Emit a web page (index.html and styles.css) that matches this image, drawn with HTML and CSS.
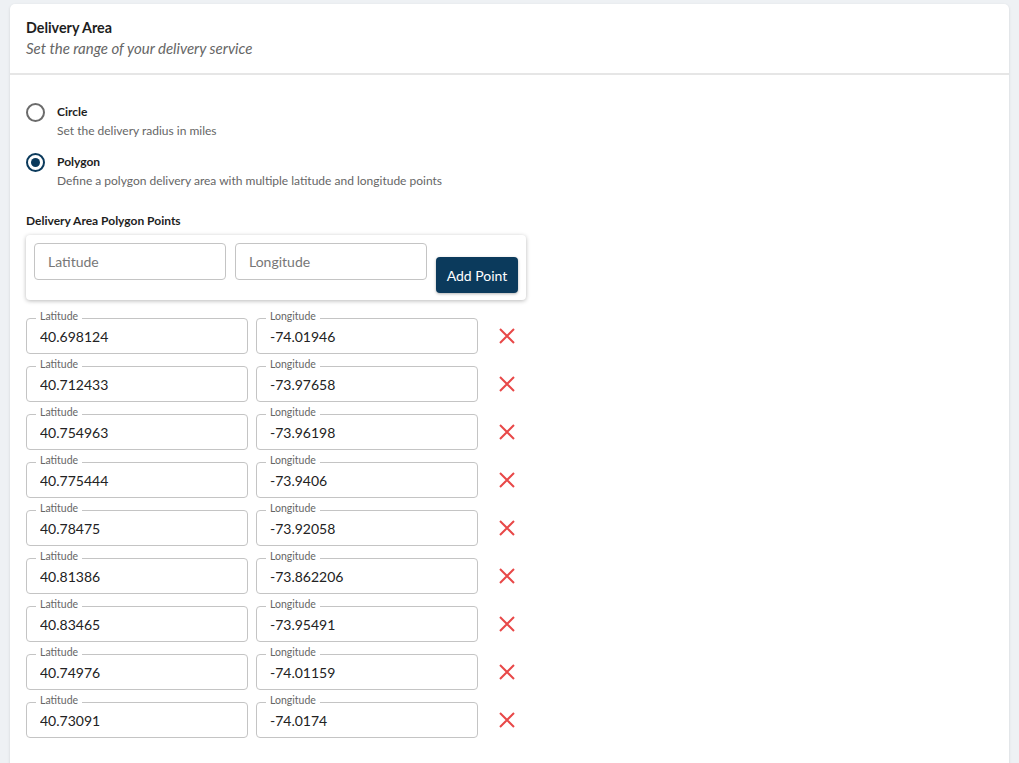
FILE: index.html
```html
<!DOCTYPE html>
<html>
  <head>
    <link rel="stylesheet" href="styles.css">
  </head>
  <body>
    <div class="card">
      <div class="cardHeader">
        <h2 class="title">Delivery Area</h2>
        <p class="subtitle">Set the range of your delivery service</p>
      </div>
      <div class="cardBody">
        <div class="radioRow">
          <span class="radio"></span>
          <div>
            <p class="radioLabel">Circle</p>
            <p class="radioHint">Set the delivery radius in miles</p>
          </div>
        </div>
        <div class="radioRow">
          <span class="radio checked"></span>
          <div>
            <p class="radioLabel">Polygon</p>
            <p class="radioHint">Define a polygon delivery area with multiple latitude and longitude points</p>
          </div>
        </div>

        <p class="sectionLabel">Delivery Area Polygon Points</p>

        <div class="addBox">
          <input class="addInput" placeholder="Latitude">
          <input class="addInput" placeholder="Longitude">
          <button class="addButton">Add Point</button>
        </div>

        <div class="points">
          <div class="pointRow">
            <fieldset class="field"><legend>Latitude</legend><input value="40.698124"></fieldset>
            <fieldset class="field"><legend>Longitude</legend><input value="-74.01946"></fieldset>
            <button class="remove"><svg viewBox="0 0 16 16"><path d="M1 1L15 15M15 1L1 15"/></svg></button>
          </div>
          <div class="pointRow">
            <fieldset class="field"><legend>Latitude</legend><input value="40.712433"></fieldset>
            <fieldset class="field"><legend>Longitude</legend><input value="-73.97658"></fieldset>
            <button class="remove"><svg viewBox="0 0 16 16"><path d="M1 1L15 15M15 1L1 15"/></svg></button>
          </div>
          <div class="pointRow">
            <fieldset class="field"><legend>Latitude</legend><input value="40.754963"></fieldset>
            <fieldset class="field"><legend>Longitude</legend><input value="-73.96198"></fieldset>
            <button class="remove"><svg viewBox="0 0 16 16"><path d="M1 1L15 15M15 1L1 15"/></svg></button>
          </div>
          <div class="pointRow">
            <fieldset class="field"><legend>Latitude</legend><input value="40.775444"></fieldset>
            <fieldset class="field"><legend>Longitude</legend><input value="-73.9406"></fieldset>
            <button class="remove"><svg viewBox="0 0 16 16"><path d="M1 1L15 15M15 1L1 15"/></svg></button>
          </div>
          <div class="pointRow">
            <fieldset class="field"><legend>Latitude</legend><input value="40.78475"></fieldset>
            <fieldset class="field"><legend>Longitude</legend><input value="-73.92058"></fieldset>
            <button class="remove"><svg viewBox="0 0 16 16"><path d="M1 1L15 15M15 1L1 15"/></svg></button>
          </div>
          <div class="pointRow">
            <fieldset class="field"><legend>Latitude</legend><input value="40.81386"></fieldset>
            <fieldset class="field"><legend>Longitude</legend><input value="-73.862206"></fieldset>
            <button class="remove"><svg viewBox="0 0 16 16"><path d="M1 1L15 15M15 1L1 15"/></svg></button>
          </div>
          <div class="pointRow">
            <fieldset class="field"><legend>Latitude</legend><input value="40.83465"></fieldset>
            <fieldset class="field"><legend>Longitude</legend><input value="-73.95491"></fieldset>
            <button class="remove"><svg viewBox="0 0 16 16"><path d="M1 1L15 15M15 1L1 15"/></svg></button>
          </div>
          <div class="pointRow">
            <fieldset class="field"><legend>Latitude</legend><input value="40.74976"></fieldset>
            <fieldset class="field"><legend>Longitude</legend><input value="-74.01159"></fieldset>
            <button class="remove"><svg viewBox="0 0 16 16"><path d="M1 1L15 15M15 1L1 15"/></svg></button>
          </div>
          <div class="pointRow">
            <fieldset class="field"><legend>Latitude</legend><input value="40.73091"></fieldset>
            <fieldset class="field"><legend>Longitude</legend><input value="-74.0174"></fieldset>
            <button class="remove"><svg viewBox="0 0 16 16"><path d="M1 1L15 15M15 1L1 15"/></svg></button>
          </div>
        </div>
      </div>
    </div>
  </body>
</html>
```

FILE: styles.css
```css
body {
  margin: 0;
  padding: 4px 10px 0 10px;
  background-color: #eef1f4;
  font-family: Lato, "Open Sans", sans-serif;
  color: #222;
  height: 763px;
  box-sizing: border-box;
  overflow: hidden;
}

p {
  margin: 0;
}

.card {
  background: #fff;
  border-radius: 5px 5px 0 0;
  box-shadow: 0 1px 3px rgba(0, 0, 0, 0.12);
  min-height: 780px;
}

.cardHeader {
  padding: 15px 16px 0 16px;
  height: 54px;
  border-bottom: 2px solid #e6e6e6;
}

.title {
  margin: 0;
  font-size: 14.3px;
  font-weight: 700;
  line-height: 18px;
  color: #1e1e1e;
}

.subtitle {
  font-size: 15px;
  font-style: italic;
  color: #666;
  line-height: 20px;
  margin-top: 1px;
}

.cardBody {
  padding: 28px 16px 0 16px;
}

.radioRow {
  display: flex;
  align-items: flex-start;
  margin-bottom: 13px;
}

.radio {
  width: 19px;
  height: 19px;
  box-sizing: border-box;
  border: 2px solid #6b6b6b;
  border-radius: 50%;
  margin-right: 12px;
  display: flex;
  align-items: center;
  justify-content: center;
  flex-shrink: 0;
}

.radio.checked {
  border-color: #0b3a5c;
}

.radio.checked::after {
  content: "";
  width: 9px;
  height: 9px;
  border-radius: 50%;
  background: #0b3a5c;
}

.radioLabel {
  font-size: 12px;
  font-weight: 700;
  line-height: 18px;
  color: #1e1e1e;
}

.radioHint {
  font-size: 12px;
  line-height: 18px;
  color: #666;
  margin-top: 1px;
}

.sectionLabel {
  font-size: 12px;
  font-weight: 700;
  line-height: 14px;
  color: #1e1e1e;
  margin-top: 24px;
  margin-bottom: 7px;
}

.addBox {
  width: 500px;
  box-sizing: border-box;
  display: flex;
  align-items: flex-start;
  gap: 9px;
  padding: 8px 8px 7px 8px;
  border-radius: 4px;
  box-shadow: 0 1px 4px rgba(0, 0, 0, 0.28);
}

.addInput {
  width: 192px;
  height: 37px;
  box-sizing: border-box;
  border: 1px solid #c4c4c4;
  border-radius: 4px;
  padding: 0 13px;
  font-family: inherit;
  font-size: 14px;
  color: #222;
  outline: none;
}

.addInput::placeholder {
  color: #777;
}

.addButton {
  margin-top: 14px;
  width: 82px;
  height: 36px;
  border: none;
  border-radius: 4px;
  background: #0b3a5c;
  color: #fff;
  font-family: inherit;
  font-size: 14px;
  box-shadow: 0 1px 3px rgba(0, 0, 0, 0.3);
}

.points {
  margin-top: 11px;
  display: flex;
  flex-direction: column;
  gap: 5px;
}

.pointRow {
  display: flex;
  align-items: center;
  gap: 8px;
}

.field {
  width: 222px;
  box-sizing: border-box;
  margin: 0;
  padding: 0 10px 6px 13px;
  border: 1px solid #c4c4c4;
  border-radius: 4px;
}

.field legend {
  font-size: 10.5px;
  line-height: 10px;
  color: #666;
  padding: 0 4px 4px 4px;
  margin-left: -4px;
}

.field input {
  border: none;
  outline: none;
  width: 100%;
  height: 22px;
  padding: 0;
  font-family: inherit;
  font-size: 14px;
  color: #222;
  background: transparent;
}

.remove {
  border: none;
  background: none;
  padding: 0;
  margin-left: 13px;
  margin-top: 7px;
  width: 16px;
  height: 16px;
  display: flex;
}

.remove svg {
  width: 16px;
  height: 16px;
  fill: none;
  stroke: #e84848;
  stroke-width: 2;
}
```
